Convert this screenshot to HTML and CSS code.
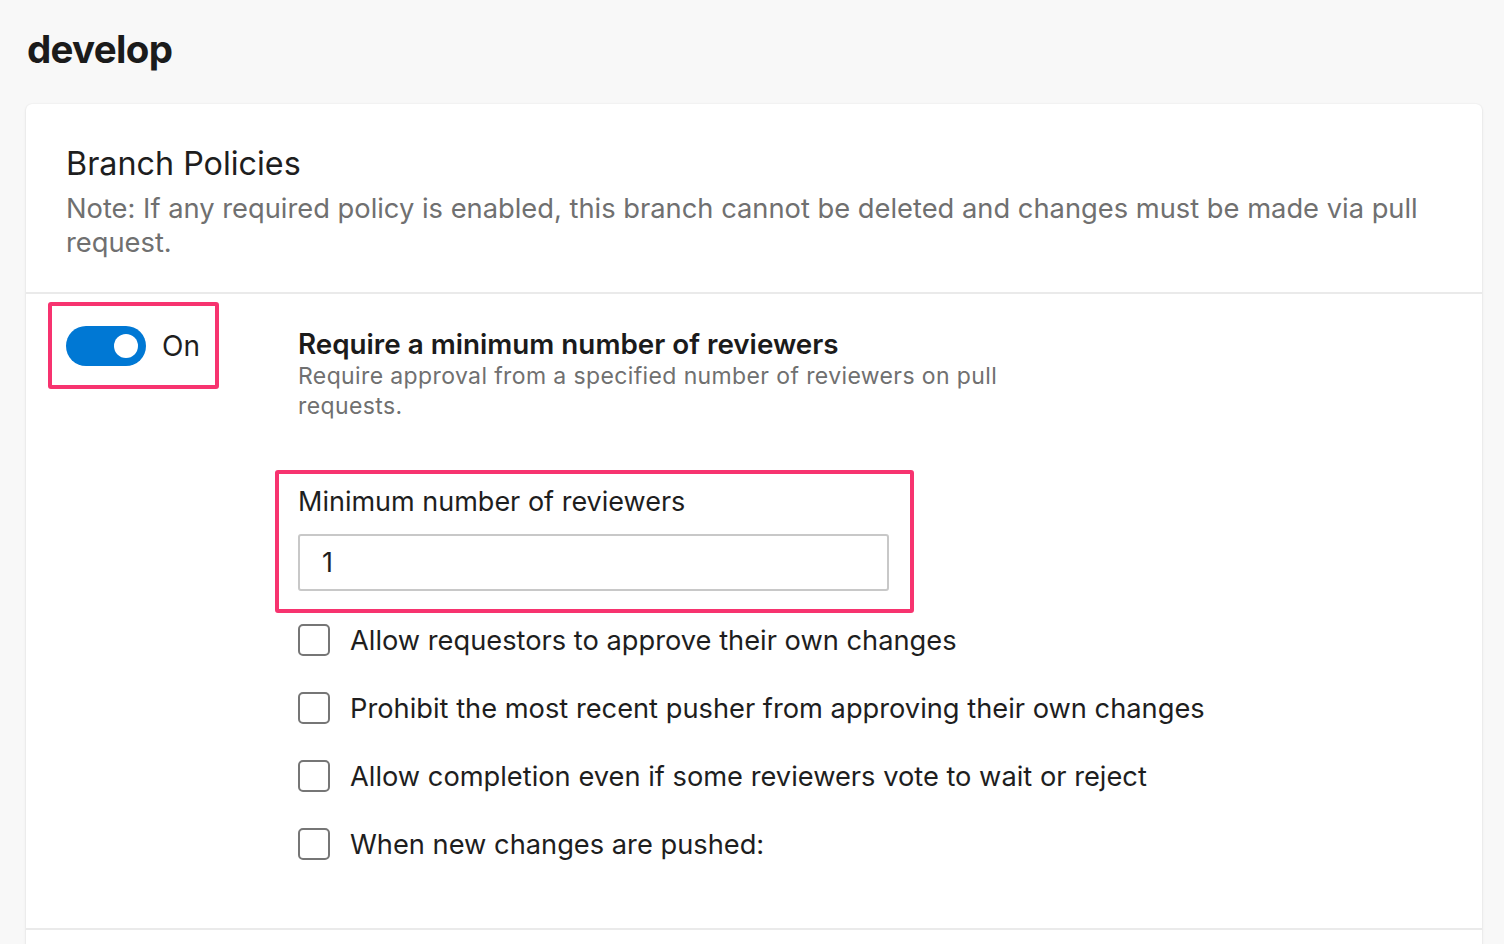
FILE: index.html
```html
<!DOCTYPE html>
<html lang="en">
<head>
<meta charset="utf-8">
<title>develop - Branch Policies</title>
<link rel="stylesheet" href="styles.css">
</head>
<body>
<div class="page">
  <h1 class="title">develop</h1>
  <section class="card">
    <header class="card-header">
      <h2 class="card-title">Branch Policies</h2>
      <p class="card-note">Note: If any required policy is enabled, this branch cannot be deleted and changes must be made via pull request.</p>
    </header>
    <div class="policy">
      <div class="policy-toggle-col">
        <div class="annot toggle-annot">
          <span class="toggle"><span class="knob"></span></span>
          <span class="toggle-label">On</span>
        </div>
      </div>
      <div class="policy-body">
        <h3 class="policy-title">Require a minimum number of reviewers</h3>
        <p class="policy-desc">Require approval from a specified number of reviewers on pull requests.</p>
        <div class="annot field-annot">
          <label class="field-label">Minimum number of reviewers</label>
          <div class="field-input">1</div>
        </div>
        <ul class="checks">
          <li class="check"><span class="box"></span><span>Allow requestors to approve their own changes</span></li>
          <li class="check"><span class="box"></span><span>Prohibit the most recent pusher from approving their own changes</span></li>
          <li class="check"><span class="box"></span><span>Allow completion even if some reviewers vote to wait or reject</span></li>
          <li class="check"><span class="box"></span><span>When new changes are pushed:</span></li>
        </ul>
      </div>
    </div>
    <div class="policy-divider"></div>
  </section>
</div>
</body>
</html>
```
FILE: styles.css
```css
* { box-sizing: border-box; }
html, body { margin: 0; padding: 0; }
body {
  background: #f8f8f8;
  font-family: Inter, "Noto Sans", "Liberation Sans", sans-serif;
  color: #1e1e1e;
  overflow: hidden;
  height: 944px;
}
.page {
  padding: 25px 22px 0 26px;
}
.title {
  margin: 0 0 0 1px;
  font-size: 38.5px;
  line-height: 48px;
  font-weight: 700;
  letter-spacing: -0.7px;
  color: #1b1b1b;
}
.card {
  margin-top: 31px;
  background: #fff;
  border-radius: 6px;
  box-shadow: 0 1px 3px rgba(0,0,0,0.10), 0 0 2px rgba(0,0,0,0.06);
  padding-bottom: 40px;
}
.card-header {
  padding: 40px 40px 32px;
  border-bottom: 2px solid #eaeaea;
}
.card-title {
  margin: 0;
  font-size: 32.3px;
  line-height: 40px;
  font-weight: 400;
  color: #1e1e1e;
}
.card-note {
  margin: 8px 0 0;
  font-size: 27.3px;
  line-height: 34px;
  color: #707070;
}
.policy {
  display: flex;
  padding: 8px 0 0 22px;
}
.policy-toggle-col {
  width: 250px;
  flex: none;
}
.annot {
  border: 4px solid #f7336f;
  border-radius: 3px;
}
.toggle-annot {
  display: inline-flex;
  align-items: center;
  width: 171px;
  height: 87px;
  padding: 0 0 0 14px;
  gap: 16px;
}
.toggle {
  width: 80px;
  height: 40px;
  border-radius: 20px;
  background: #0078d4;
  display: flex;
  align-items: center;
  justify-content: flex-end;
  padding-right: 8px;
}
.knob {
  width: 24px;
  height: 24px;
  border-radius: 50%;
  background: #fff;
}
.toggle-label {
  font-size: 28px;
  color: #1e1e1e;
}
.policy-body {
  padding-top: 25px;
  flex: 1;
}
.policy-title {
  margin: 0;
  font-size: 27.8px;
  line-height: 34px;
  font-weight: 600;
  color: #1b1b1b;
}
.policy-desc {
  margin: 0;
  width: 740px;
  font-size: 23px;
  line-height: 30px;
  color: #707070;
  letter-spacing: 0.38px;
}
.field-annot {
  margin: 49px 0 0 -23px;
  width: 639px;
  padding: 10px 21px 18px 19px;
}
.field-label {
  display: block;
  font-size: 27px;
  line-height: 36px;
  color: #1e1e1e;
}
.field-input {
  margin-top: 14px;
  height: 57px;
  width: 591px;
  border: 2px solid #c8c8c8;
  border-radius: 3px;
  padding: 0 22px;
  display: flex;
  align-items: center;
  font-size: 27px;
  color: #1e1e1e;
}
.checks {
  list-style: none;
  margin: 11px 0 0;
  padding: 0;
  display: flex;
  flex-direction: column;
  gap: 36px;
}
.check {
  display: flex;
  align-items: center;
  gap: 20px;
  height: 32px;
  font-size: 27.25px;
  color: #1e1e1e;
}
.box {
  width: 32px;
  height: 32px;
  border: 2px solid #767676;
  border-radius: 5px;
  flex: none;
}
.policy-divider {
  margin-top: 68px;
  height: 2px;
  background: #eaeaea;
}
```
